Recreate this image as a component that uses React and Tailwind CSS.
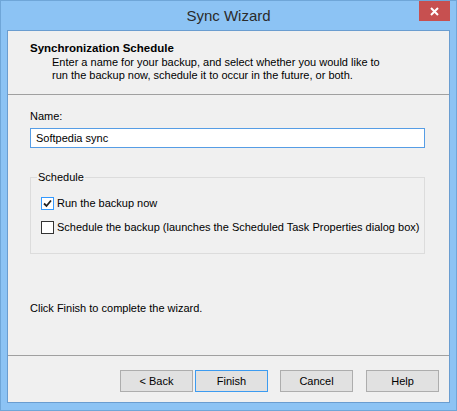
import React, { useState } from "react";

const WinButton = ({ children, primary }) => (
  <button
    type="button"
    className={
      primary
        ? "h-[22px] w-[73px] border border-[#3c9bf0] bg-[#e1e1e1] text-[11px] text-black"
        : "h-[22px] w-[73px] border border-[#adadad] bg-[#e1e1e1] text-[11px] text-black"
    }
  >
    {children}
  </button>
);

const CheckRow = ({ checked, onChange, label, focused }) => (
  <label className="flex h-[16px] items-center gap-[3px] pl-[10px]">
    <span
      onClick={onChange}
      className={
        focused
          ? "flex h-[13px] w-[13px] shrink-0 items-center justify-center border border-[#3399ff] bg-white"
          : "flex h-[13px] w-[13px] shrink-0 items-center justify-center border border-[#333333] bg-white"
      }
    >
      {checked && (
        <svg width="9" height="9" viewBox="0 0 9 9">
          <path d="M1 4.5 L3.5 7 L8 1.5" fill="none" stroke="#222" strokeWidth="1.8" />
        </svg>
      )}
    </span>
    <span className="whitespace-nowrap text-[11px] text-black">{label}</span>
  </label>
);

export default function App() {
  const [name, setName] = useState("Softpedia sync");
  const [runNow, setRunNow] = useState(true);
  const [schedule, setSchedule] = useState(false);

  return (
    <div
      className="flex h-[411px] w-[457px] flex-col border border-[#6fa6d8] bg-[#8cc3f4] px-[6px] pb-[7px]"
      style={{ fontFamily: '"Liberation Sans", Arial, sans-serif' }}
    >
      {/* title bar */}
      <div className="grid h-[29px] grid-cols-[1fr_auto_1fr]">
        <div />
        <div className="pt-[4px] text-[15px] text-[#2b2b2b]">Sync Wizard</div>
        <div className="flex justify-end">
          <div className="flex h-[20px] w-[31px] items-center justify-center bg-[#c75050]">
            <svg width="9" height="9" viewBox="0 0 9 9">
              <path d="M1 1 L8 8 M8 1 L1 8" stroke="white" strokeWidth="2" />
            </svg>
          </div>
        </div>
      </div>

      {/* client area */}
      <div className="flex flex-1 flex-col border border-[#6a9dd0] bg-[#f0f0f0]">
        <div className="h-[64px] border-b border-[#a0a0a0] pl-[22px] pt-[10px]">
          <div className="text-[11.5px] font-bold leading-[15px] text-black">Synchronization Schedule</div>
          <div className="pl-[22px] text-[11px] leading-[13px] text-black">
            Enter a name for your backup, and select whether you would like to
            <br />
            run the backup now, schedule it to occur in the future, or both.
          </div>
        </div>

        <div className="flex flex-1 flex-col border-b border-[#a0a0a0] pl-[22px] pr-[24px]">
          <div className="mt-[14px] text-[11px] leading-[15px] text-black">Name:</div>
          <input
            value={name}
            onChange={(e) => setName(e.target.value)}
            className="mt-[4px] h-[20px] w-full border border-[#569de5] bg-white px-[5px] text-[11px] text-black outline-none"
          />

          <fieldset className="mt-[22px] border border-[#dcdcdc] pb-[18px]">
            <legend className="ml-[6px] px-[1px] text-[11px] leading-[15px] text-black">Schedule</legend>
            <div className="mt-[10px] flex flex-col gap-[8px]">
              <CheckRow checked={runNow} onChange={() => setRunNow(!runNow)} label="Run the backup now" focused />
              <CheckRow
                checked={schedule}
                onChange={() => setSchedule(!schedule)}
                label="Schedule the backup (launches the Scheduled Task Properties dialog box)"
              />
            </div>
          </fieldset>

          <div className="mt-[47px] text-[11px] leading-[15px] text-black">Click Finish to complete the wizard.</div>
        </div>

        <div className="flex h-[46px] items-start pr-[10px] pt-[14px]">
          <div className="ml-auto flex gap-[2px]">
            <WinButton>&lt; Back</WinButton>
            <WinButton primary>Finish</WinButton>
          </div>
          <div className="ml-[12px] flex gap-[13px]">
            <WinButton>Cancel</WinButton>
            <WinButton>Help</WinButton>
          </div>
        </div>
      </div>
    </div>
  );
}
